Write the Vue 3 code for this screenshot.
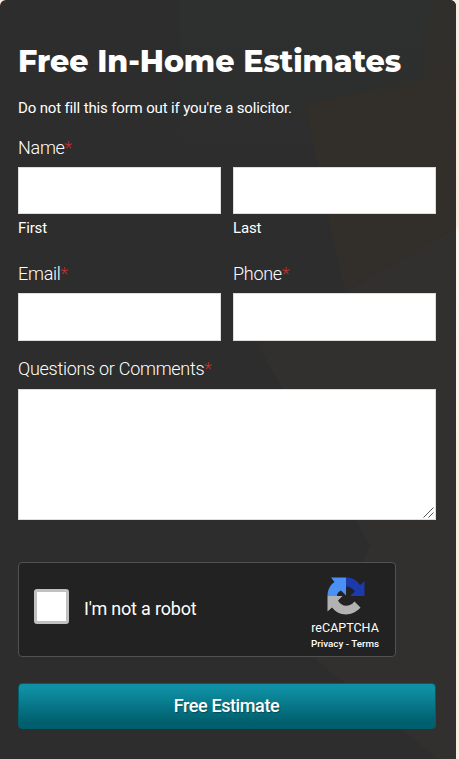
<template>
  <div class="page">
    <section class="estimate-card">
      <svg class="backdrop" viewBox="0 0 456 759" preserveAspectRatio="none" aria-hidden="true">
        <path d="M180 0H431L422 78L305 105L316 155H180Z" fill="url(#glass)" />
        <path d="M431 0H456V72L422 78Z" fill="#302f2c" />
        <path d="M305 105L422 78L456 70V228L345 292L335 250Z" fill="#322f2b" />
        <path d="M345 292L456 228V433L370 546L285 393L258 346Z" fill="#31302e" />
        <path d="M370 546L456 433V759H438L316 660Z" fill="#32302e" />
        <defs>
          <linearGradient id="glass" x1="0" x2="0" y1="0" y2="1">
            <stop offset="0" stop-color="#2e3030" />
            <stop offset="1" stop-color="#2d2d2d" />
          </linearGradient>
        </defs>
      </svg>

      <form class="estimate-form" @submit.prevent>
        <h2>Free In-Home Estimates</h2>
        <p class="notice">Do not fill this form out if you're a solicitor.</p>

        <div class="field">
          <label class="field-label" for="first">Name<span class="required">*</span></label>
          <div class="row">
            <div class="sub-field">
              <input id="first" v-model="form.first" type="text">
              <label class="sub-label" for="first">First</label>
            </div>
            <div class="sub-field">
              <input id="last" v-model="form.last" type="text">
              <label class="sub-label" for="last">Last</label>
            </div>
          </div>
        </div>

        <div class="row contact-row">
          <div v-for="field in contactFields" :key="field.id" class="sub-field">
            <label class="field-label" :for="field.id">{{ field.label }}<span class="required">*</span></label>
            <input :id="field.id" v-model="form[field.id]" :type="field.type">
          </div>
        </div>

        <div class="field comments">
          <label class="field-label" for="comments">Questions or Comments<span class="required">*</span></label>
          <div class="textarea-wrap">
            <textarea id="comments" v-model="form.comments"></textarea>
            <svg class="grip" viewBox="0 0 11 11" aria-hidden="true">
              <path d="M0.5 10.5L10.5 0.5M5.5 10.5L10.5 5.5" stroke="#555" stroke-width="1" />
            </svg>
          </div>
        </div>

        <div class="captcha">
          <button
            type="button"
            class="captcha-box"
            role="checkbox"
            :aria-checked="form.human"
            @click="form.human = !form.human"
          ></button>
          <span class="captcha-text">I'm not a robot</span>
          <div class="captcha-brand">
            <svg class="captcha-logo" viewBox="0 0 38 38" aria-hidden="true">
              <path d="M19 0.5H4L7.5 5C3 8 0.5 13 0.5 19H10C10 16.500 11.500 14.500 14 13.500L19 18.500Z" fill="#4a90f5" />
              <path d="M19 0.5C25 0.5 30 3 33 8L37.5 4V19H23L28 14.500C26 11.500 23 9.500 19 9.500Z" fill="#1c3aa9" />
              <path d="M0.5 19H15.5L11 23.500C14 29.500 22 31 27.500 24.500L33.500 30.500C25 40 12 39.500 5 30.500L0.5 34.500Z" fill="#b2b2b2" />
            </svg>
            <span class="captcha-name">reCAPTCHA</span>
            <span class="captcha-links">Privacy - Terms</span>
          </div>
        </div>

        <button type="submit" class="submit-btn">Free Estimate</button>
      </form>
    </section>
  </div>
</template>

<script setup>
import { reactive } from 'vue'

const contactFields = [
  { id: 'email', label: 'Email', type: 'email' },
  { id: 'phone', label: 'Phone', type: 'tel' }
]

const form = reactive({
  first: '',
  last: '',
  email: '',
  phone: '',
  comments: '',
  human: false
})
</script>

<style>
body {
  margin: 0;
}
</style>

<style scoped>
.page {
  height: 759px;
  overflow: hidden;
  background: linear-gradient(#fbeae1 0, #f8e6dc 225px, #fdf2ea 232px, #fdeee4 430px, #f9e9df 445px, #faeae0 100%);
  font-family: Roboto, "Liberation Sans", sans-serif;
  color: #fff;
}

.estimate-card {
  position: relative;
  width: 456px;
  height: 100%;
  background: #2d2d2d;
  border-radius: 6px 6px 0 0;
  overflow: hidden;
}

.backdrop {
  position: absolute;
  inset: 0;
  width: 100%;
  height: 100%;
}

.estimate-form {
  position: relative;
  box-sizing: border-box;
  padding: 43px 20px 0 18px;
}

h2 {
  margin: 0;
  font-family: Montserrat, Inter, sans-serif;
  font-size: 30px;
  font-weight: 800;
  line-height: 38px;
  letter-spacing: -0.03px;
  white-space: nowrap;
}

.notice {
  margin: 17px 0 0;
  font-size: 15px;
  line-height: 20px;
  letter-spacing: -0.15px;
}

.field {
  margin-top: 17px;
}

.field-label {
  display: block;
  height: 32px;
  font-size: 18px;
  font-weight: 300;
  line-height: 26px;
  letter-spacing: -0.28px;
}

.required {
  color: #c32f2c;
}

.row {
  display: flex;
  gap: 12px;
}

.sub-field {
  flex: 1;
  min-width: 0;
}

input,
textarea {
  display: block;
  box-sizing: border-box;
  width: 100%;
  margin: 0;
  padding: 8px;
  background: #fff;
  border: 1px solid #ddd;
  border-radius: 0;
  outline: none;
  font: inherit;
  color: #333;
}

input {
  height: 47px;
}

.sub-label {
  display: block;
  margin-top: 4px;
  font-size: 15px;
  line-height: 20px;
  letter-spacing: -0.14px;
}

.contact-row {
  margin-top: 23px;
}

.contact-row input {
  height: 48px;
}

.comments {
  margin-top: 15px;
}

.comments .field-label {
  height: 33px;
}

.textarea-wrap {
  position: relative;
}

textarea {
  height: 131px;
  resize: none;
}

.grip {
  position: absolute;
  right: 2px;
  bottom: 2px;
  width: 11px;
  height: 11px;
}

.captcha {
  display: flex;
  align-items: center;
  box-sizing: border-box;
  width: 378px;
  height: 95px;
  margin-top: 42px;
  padding: 0 16px 0 15px;
  background: #222;
  border: 1px solid #525252;
  border-radius: 4px;
}

.captcha-box {
  box-sizing: border-box;
  width: 35px;
  height: 35px;
  margin-bottom: 6px;
  padding: 0;
  background: #fff;
  border: 3px solid #c1c1c1;
  border-radius: 3px;
}

.captcha-text {
  margin: 0 0 3px 15px;
  font-size: 18px;
  letter-spacing: -0.2px;
}

.captcha-brand {
  display: flex;
  flex-direction: column;
  align-items: center;
  margin-left: auto;
}

.captcha-logo {
  width: 38px;
  height: 38px;
  margin: 8px 0 0 2px;
}

.captcha-name {
  margin-top: 5px;
  font-size: 12.5px;
  line-height: 16px;
}

.captcha-links {
  margin-top: 1px;
  font-size: 9.8px;
  font-weight: 500;
  line-height: 14px;
}

.submit-btn {
  display: block;
  width: 100%;
  height: 46px;
  margin-top: 26px;
  padding: 0 1px 1px 0;
  background: linear-gradient(#0f90a4 10%, #005e6d 88%);
  border: 1px solid #005e6d;
  border-radius: 4px;
  font: 500 18px Roboto, "Liberation Sans", sans-serif;
  letter-spacing: -0.4px;
  color: #fff;
  text-shadow: 1px 1px 1px rgba(0, 0, 0, 0.3);
  cursor: pointer;
}
</style>
